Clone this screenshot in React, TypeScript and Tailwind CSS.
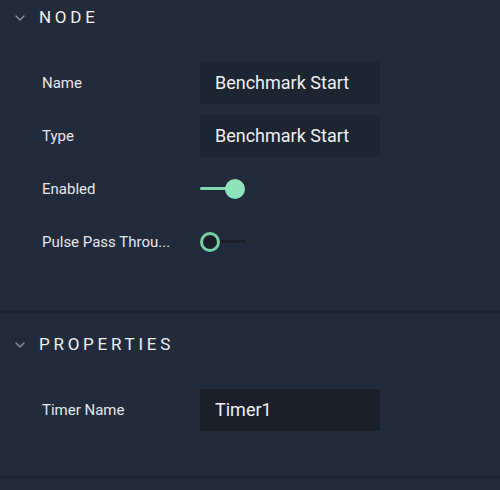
import { ChevronDown } from 'lucide-react';

interface RowProps {
  label: string;
  children: React.ReactNode;
}

function Row({ label, children }: RowProps) {
  return (
    <div className="flex items-center h-[53px]">
      <div className="w-[200px] pl-[42px] pr-[20px] pt-[2px] text-[15px] text-[#e4e7eb] whitespace-nowrap overflow-hidden text-ellipsis">
        {label}
      </div>
      {children}
    </div>
  );
}

function TextInput({ value, dark }: { value: string; dark?: boolean }) {
  return (
    <div
      className={`w-[180px] h-[42px] flex items-center pl-[15px] text-[18px] text-[#eef0f3] ${
        dark ? 'bg-[#1a1f29]' : 'bg-[#1d2432]'
      }`}
    >
      {value}
    </div>
  );
}

function Toggle({ on }: { on: boolean }) {
  return (
    <div className="relative w-[46px] h-[20px] flex items-center">
      {on ? (
        <>
          <div className="absolute left-0 w-[35px] h-[3px] rounded-full bg-[#7fd9b0]" />
          <div className="absolute left-[25px] w-[20px] h-[20px] rounded-full bg-[#8de3bc]" />
        </>
      ) : (
        <>
          <div className="absolute left-[20px] w-[25px] h-[3px] bg-[#1a1f29]" />
          <div className="absolute left-0 w-[20px] h-[20px] rounded-full border-[3px] border-[#78cfa6] bg-[#1a1f29]" />
        </>
      )}
    </div>
  );
}

function SectionHeader({ title }: { title: string }) {
  return (
    <div className="flex items-center h-[35px] pl-[12px]">
      <ChevronDown className="w-[16px] h-[16px] text-[#8a93a1]" strokeWidth={2} />
      <span className="ml-[11px] text-[17px] tracking-[0.22em] text-[#eef0f3]">{title}</span>
    </div>
  );
}

export default function App() {
  return (
    <div className="w-[500px] h-[490px] bg-[#222b3b] overflow-hidden" style={{ fontFamily: 'Roboto, sans-serif' }}>
      <div className="pb-[42px]">
        <SectionHeader title="NODE" />
        <div className="pt-[21px]">
          <Row label="Name">
            <TextInput value="Benchmark Start" />
          </Row>
          <Row label="Type">
            <TextInput value="Benchmark Start" />
          </Row>
          <Row label="Enabled">
            <Toggle on />
          </Row>
          <Row label="Pulse Pass Throu...">
            <Toggle on={false} />
          </Row>
        </div>
      </div>
      <div className="h-[3px] bg-[#1c2331]" />
      <div className="pt-[14px] pb-[40px]">
        <SectionHeader title="PROPERTIES" />
        <div className="pt-[21px]">
          <Row label="Timer Name">
            <TextInput value="Timer1" dark />
          </Row>
        </div>
      </div>
      <div className="h-[3px] bg-[#1c2331]" />
    </div>
  );
}
